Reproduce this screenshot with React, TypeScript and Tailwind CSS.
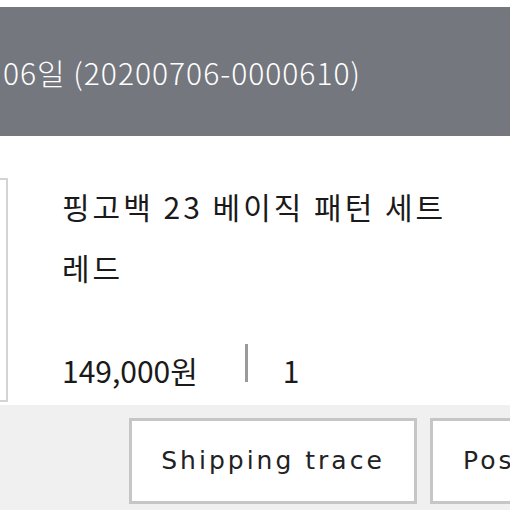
export default function App() {
  const ko = { fontFamily: '"Noto Sans CJK KR", "Noto Sans", sans-serif' };
  const en = { fontFamily: '"DejaVu Sans", sans-serif' };
  return (
    <div className="w-[510px] h-[510px] overflow-hidden bg-white flex flex-col" style={ko}>
      <div className="h-[7px] shrink-0 bg-white" />
      <div className="h-[129px] shrink-0 bg-[#74777e] flex items-center pl-[3px]">
        <span className="text-[30px] font-light tracking-[1px] text-white whitespace-nowrap leading-none">
          06일 (20200706-0000610)
        </span>
      </div>
      <div className="h-[269px] shrink-0 bg-white pt-[42px] flex">
        <div className="w-[8px] h-[224px] shrink-0 border-2 border-l-0 border-[#d4d4d4]" />
        <div className="ml-[54px] flex flex-col">
          <div className="mt-[-2px] text-[30px] leading-[61px] text-[#1a1a1a] tracking-[3px] whitespace-nowrap">
            <div>핑고백 23 베이직 패턴 세트</div>
            <div>레드</div>
          </div>
          <div className="mt-[52px] h-[40px] flex items-center text-[30px] text-[#1a1a1a] whitespace-nowrap">
            <span className="leading-none">149,000원</span>
            <span className="ml-[47px] w-[3px] h-[38px] bg-[#9a9a9a] -mt-[14px]" />
            <span className="ml-[35px] leading-none">1</span>
          </div>
        </div>
      </div>
      <div className="flex-1 bg-[#f0f0f0] pt-[13px] pl-[129px] flex gap-[13px]">
        <div
          className="w-[288px] h-[86px] shrink-0 bg-white border-[3px] border-[#c6c6c6] flex items-center justify-center text-[25px] tracking-[3px] text-[#222] whitespace-nowrap"
          style={en}
        >
          Shipping trace
        </div>
        <div
          className="w-[288px] h-[86px] shrink-0 bg-white border-[3px] border-[#c6c6c6] flex items-center pl-[30px] text-[25px] tracking-[3px] text-[#222] whitespace-nowrap"
          style={en}
        >
          Post review
        </div>
      </div>
    </div>
  );
}
